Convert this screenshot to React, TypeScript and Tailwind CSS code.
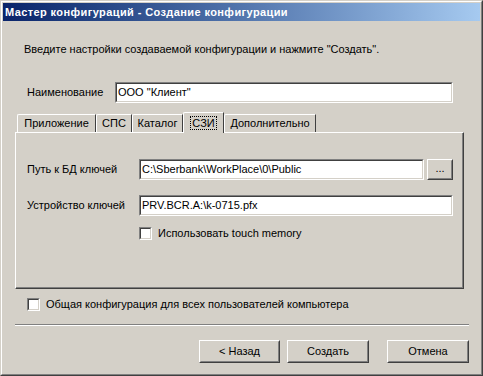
import React from "react";

const face = "bg-[#d4d0c8]";

function Sunken({ className = "", children }: { className?: string; children?: React.ReactNode }) {
    return (
        <div className={`border border-t-[#808080] border-l-[#808080] border-b-white border-r-white ${className}`}>
            <div className="h-full w-full border border-t-[#404040] border-l-[#404040] border-b-[#d4d0c8] border-r-[#d4d0c8] bg-white flex items-center pl-[1px] leading-none whitespace-nowrap overflow-hidden">
                {children}
            </div>
        </div>
    );
}

function Button({ className = "", children }: { className?: string; children: React.ReactNode }) {
    return (
        <div className={`border border-t-white border-l-white border-b-[#404040] border-r-[#404040] ${className}`}>
            <div className="h-full w-full border border-t-[#d4d0c8] border-l-[#d4d0c8] border-b-[#808080] border-r-[#808080] flex items-center justify-center">
                {children}
            </div>
        </div>
    );
}

function Checkbox({ label }: { label: string }) {
    return (
        <div className="flex items-center">
            <Sunken className="w-[13px] h-[13px]" />
            <span className="ml-[6px] leading-[13px]">{label}</span>
        </div>
    );
}

const tabs = [
    { label: "Приложение", w: "w-[79px]" },
    { label: "СПС", w: "w-[36px]" },
    { label: "Каталог", w: "w-[51px]" },
    { label: "СЗИ", w: "w-[41px]", active: true },
    { label: "Дополнительно", w: "w-[92px]" },
];

export default function App() {
    return (
        <div className={`w-[483px] h-[376px] ${face} text-[11px] text-black font-['Liberation_Sans',sans-serif] border border-t-[#d4d0c8] border-l-[#d4d0c8] border-b-[#404040] border-r-[#404040]`}>
            <div className="h-full border border-t-white border-l-white border-b-[#808080] border-r-[#808080] p-[1px] flex flex-col">
                {/* title bar */}
                <div className="h-[18px] bg-gradient-to-r from-[#0a246a] to-[#a6caf0] flex items-center pl-[2px]">
                    <span className="text-white font-bold text-[11px] tracking-[0.4px] leading-none">Мастер конфигураций - Создание конфигурации</span>
                </div>

                <div className="flex-1 flex flex-col">
                    <p className="mt-[22px] ml-[21px] leading-[13px]">
                        Введите настройки создаваемой конфигурации и нажмите "Создать".
                    </p>

                    <div className="mt-[26px] ml-[24px] flex items-center">
                        <span className="w-[88px] leading-[13px]">Наименование</span>
                        <Sunken className="w-[338px] h-[21px]">ООО "Клиент"</Sunken>
                    </div>

                    {/* tabs */}
                    <div className="mt-[8px] ml-[12px] w-[449px]">
                        <div className="flex items-end h-[21px] pl-[2px]">
                            {tabs.map((t) =>
                                t.active ? (
                                    <div key={t.label} className={`relative z-10 ${t.w} h-[21px] -mb-[1px] ${face} border-t border-l border-r border-t-white border-l-white border-r-[#404040] rounded-tl-[2px] flex items-start justify-center pt-[3px]`}>
                                        <span className="border border-dotted border-black px-[1px] leading-[12px]">{t.label}</span>
                                    </div>
                                ) : (
                                    <div key={t.label} className={`${t.w} h-[18px] border-t border-l border-r border-t-white border-l-white border-r-[#404040] rounded-tl-[2px] flex items-center justify-center`}>
                                        <span className="leading-[13px]">{t.label}</span>
                                    </div>
                                )
                            )}
                        </div>
                        <div className="h-[157px] border border-t-white border-l-white border-b-[#404040] border-r-[#404040]">
                            <div className="h-full border-b border-r border-b-[#808080] border-r-[#808080] pl-[11px] pt-[26px] flex flex-col">
                                <div className="flex items-center">
                                    <span className="w-[112px] leading-[13px]">Путь к БД ключей</span>
                                    <Sunken className="w-[285px] h-[21px]">C:\Sberbank\WorkPlace\0\Public</Sunken>
                                    <Button className="ml-[3px] w-[26px] h-[21px]"><span className="leading-none -mt-[2px]">...</span></Button>
                                </div>
                                <div className="mt-[15px] flex items-center">
                                    <span className="w-[112px] leading-[13px]">Устройство ключей</span>
                                    <Sunken className="w-[314px] h-[21px]">PRV.BCR.A:\k-0715.pfx</Sunken>
                                </div>
                                <div className="mt-[11px] ml-[112px]">
                                    <Checkbox label="Использовать touch memory" />
                                </div>
                            </div>
                        </div>
                    </div>

                    <div className="mt-[9px] ml-[24px]">
                        <Checkbox label="Общая конфигурация для всех пользователей компьютера" />
                    </div>

                    <div className="mt-[13px] ml-[12px] w-[454px] border-t border-b border-t-[#808080] border-b-white" />

                    <div className="mt-[14px] ml-[196px] flex">
                        <Button className="w-[81px] h-[23px]">&lt; Назад</Button>
                        <Button className="ml-[7px] w-[82px] h-[23px]">Создать</Button>
                        <Button className="ml-[18px] w-[82px] h-[23px]">Отмена</Button>
                    </div>
                </div>
            </div>
        </div>
    );
}
